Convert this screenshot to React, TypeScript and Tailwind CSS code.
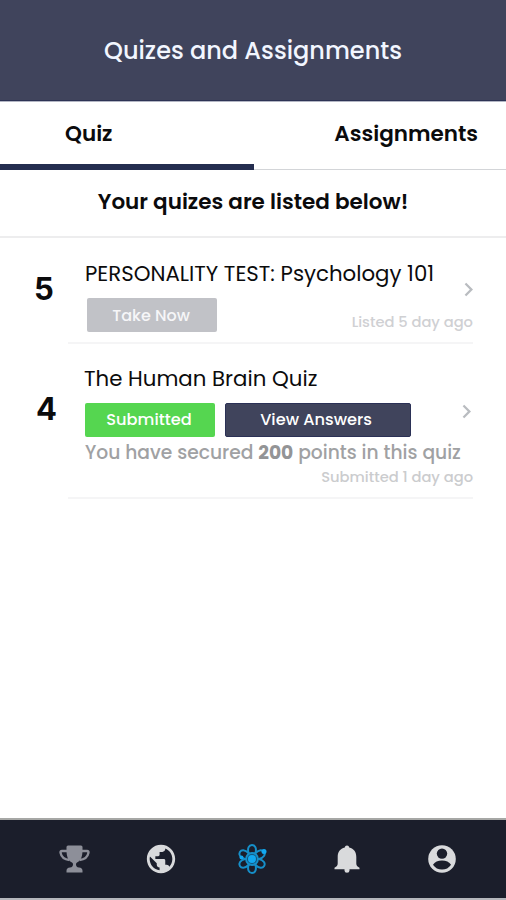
import type { ReactNode } from "react";
import { MdChevronRight, MdPublic } from "react-icons/md";

const PETALS = [0, 60, 120, 180, 240, 300];

function TrophyIcon() {
  return (
    <svg width="31" height="28" viewBox="0 0 31 28" fill="currentColor">
      <path d="M9 0.5h13a1.5 1.5 0 0 1 1.5 1.5v3c0 6.5-1.5 10.5-5.5 12.5-.7.4-1 1-1 1.800 0 1.900.8 3 3 3.200 2.300.1 3.500 1.300 3.500 3.200v1.800h-16v-1.800c0-1.900 1.200-3.100 3.500-3.200 2.200-.2 3-1.300 3-3.200 0-.8-.3-1.400-1-1.800-4-2-5.500-6-5.500-12.500V2A1.500 1.500 0 0 1 9 .5z" />
      <path d="M8 6H3C1.600 6 1.300 6.500 1.500 7.800 2.200 11.500 5 14.500 10.500 15M23 6h5c1.400 0 1.700.5 1.500 1.800-.7 3.700-3.500 6.700-9 7.200" fill="none" stroke="currentColor" strokeWidth="2.300" strokeLinejoin="round" />
    </svg>
  );
}

function AtomIcon() {
  return (
    <svg width="32" height="32" viewBox="0 0 32 32" fill="none" stroke="#168fc9" strokeWidth="2">
      {PETALS.map((deg) => (
        <path key={deg} d="M12.500 10C11.200 5 13 2 16 2s4.800 3 3.500 8L16 16z" transform={`rotate(${deg} 16 16)`} />
      ))}
      <circle cx="16" cy="16" r="6" strokeWidth="1.800" fill="#14577e" />
      <circle cx="16" cy="16" r="4" fill="#12a8f0" stroke="none" />
      <circle cx="28" cy="8.500" r="2.500" fill="#12a8f0" stroke="none" />
      <circle cx="5.500" cy="14.500" r="2" fill="#12a8f0" stroke="none" />
    </svg>
  );
}

function BellIcon() {
  return (
    <svg width="26" height="28" viewBox="0 0 26 28" fill="currentColor">
      <path d="M13 .5c1.300 0 2 .8 2.200 2.100C19.900 3.700 22.300 7 22.300 12v6.500c0 2 .9 3 3.200 4.200v1.500H.5v-1.500c2.300-1.200 3.200-2.200 3.200-4.200V12c0-5 2.400-8.300 7.100-9.400C11 1.300 11.700.5 13 .5z" />
      <path d="M10.500 24h5v1.500a2.500 2.300 0 0 1-5 0z" />
    </svg>
  );
}

function AccountIcon() {
  return (
    <svg width="28" height="28" viewBox="0 0 28 28" fill="currentColor">
      <circle cx="14" cy="14" r="13.800" />
      <circle cx="14" cy="8.600" r="5.200" fill="#1b1e2b" />
      <path d="M5 19.700c1.600-2.900 5-4.300 9-4.300s7.400 1.400 9 4.300c-2 3.200-5.300 4.900-9 4.900s-7-1.700-9-4.900z" fill="#1b1e2b" />
    </svg>
  );
}

// One quiz row: rank on the left, details in the middle, chevron on the right
function QuizRow({ rank, className, children }: { rank: ReactNode; className: string; children: ReactNode }) {
  return (
    <section className={`flex ${className}`}>
      <div className="w-[68px] shrink-0 font-['Inter',sans-serif] text-[31px] leading-10 font-bold">{rank}</div>
      <div className="relative w-[405px] border-b-2 border-[#f5f5f6]">{children}</div>
    </section>
  );
}

export default function App() {
  return (
    <div className="flex h-[900px] w-[506px] flex-col overflow-hidden bg-white font-['Poppins','Inter',sans-serif] whitespace-nowrap text-[#0b0b0c]">
      <header className="flex h-[101px] items-center justify-center border-b border-[#2d3354] bg-[#40445c] pt-px text-[#f2f6ff]">
        <h1 className="text-[24px] font-medium">Quizes and Assignments</h1>
      </header>

      <nav className="flex h-[69px] border-t border-b border-t-[#b3b6c4] border-b-[#d3d5d8] text-[21.5px] font-semibold">
        <button className="-mb-px flex w-[254px] items-start border-b-[6px] border-[#242d4f] pt-4 pl-[65px]">Quiz</button>
        <button className="flex flex-1 items-start justify-end pt-4 pr-7">Assignments</button>
      </nav>

      <p className="flex h-[68px] items-start justify-center border-b-2 border-[#ededee] pt-4 text-[21.5px] font-semibold">
        Your quizes are listed below!
      </p>

      <main className="flex-1">
        <QuizRow rank={<div className="pt-[31px] pl-[34px]">5</div>} className="h-[106px]">
          <h2 className="pt-5 pl-[17px] text-[21.3px] leading-8">PERSONALITY TEST: Psychology 101</h2>
          <div className="mt-2 flex justify-between pl-[19px]">
            <button className="h-[34px] w-[130px] rounded-[2px] bg-[#c1c2c7] pt-px pr-0.5 text-[16px] font-medium text-[#f6f6f8]">Take Now</button>
            <span className="pt-[13px] text-[14.7px] font-medium text-[#cfd0d3]">Listed 5 day ago</span>
          </div>
          <MdChevronRight className="absolute top-[38px] right-[-9px] size-[27px] text-[#b9bcc0]" />
        </QuizRow>

        <QuizRow rank={<div className="pt-[45px] pl-[36px]">4</div>} className="h-[155px]">
          <h2 className="pt-[19px] pl-4 text-[21.3px] leading-8">The Human Brain Quiz</h2>
          <div className="mt-2 flex gap-2.5 pl-[17px] text-[16.200px] font-medium text-white">
            <button className="h-[34px] w-[130px] rounded-[2px] bg-[#55d650] pt-px pr-0.5">Submitted</button>
            <button className="h-[34px] w-[186px] rounded-[2px] border border-[#2b3156] bg-[#40445c] pt-px pr-1">View Answers</button>
          </div>
          <p className="pt-[2px] pl-[17px] text-[18.7px] leading-7 font-medium text-[#a0a1a3]">
            You have secured <b className="text-[#939496]">200</b> points in this quiz
          </p>
          <p className="text-right text-[14.7px] leading-5 font-medium text-[#cbccce]">Submitted 1 day ago</p>
          <MdChevronRight className="absolute top-[54px] right-[-7px] size-[27px] text-[#b9bcc0]" />
        </QuizRow>
      </main>

      <footer className="flex h-[82px] items-center border-y-2 border-t-[#a6a7a5] border-b-[#b5b7bc] bg-[#1b1e2b] text-[#d9dadc]">
        <button className="ml-[59px] text-[#8d8f99]"><TrophyIcon /></button>
        <button className="ml-[54px]"><MdPublic className="size-[34px]" /></button>
        <button className="ml-[58px]"><AtomIcon /></button>
        <button className="ml-[66px]"><BellIcon /></button>
        <button className="ml-[68px]"><AccountIcon /></button>
      </footer>
    </div>
  );
}
